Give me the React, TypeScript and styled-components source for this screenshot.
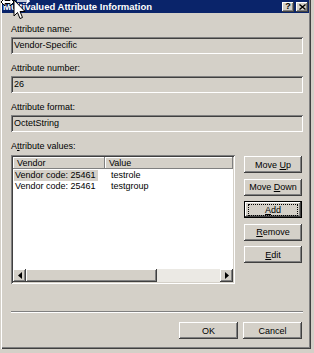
import React from 'react';
import styled, { createGlobalStyle } from 'styled-components';

const GlobalStyle = createGlobalStyle`
  html, body {
    margin: 0;
    padding: 0;
    background: #404040;
    overflow: hidden;
  }
`;

const raised = `
  box-shadow: inset -1px -1px #404040, inset 1px 1px #ffffff,
    inset -2px -2px #808080, inset 2px 2px #d4d0c8;
`;

const sunken = `
  box-shadow: inset 1px 1px #808080, inset -1px -1px #ffffff,
    inset 2px 2px #404040, inset -2px -2px #d4d0c8;
`;

const Screen = styled.div`
  width: 314px;
  height: 353px;
  position: relative;
  background: #d4d0c8;
  font-family: 'Liberation Sans', Arial, sans-serif;
  font-size: 9px;
  color: #000;
`;

const Window = styled.div`
  width: 311px;
  height: 349px;
  box-sizing: border-box;
  padding: 0 2px 2px 2px;
  display: flex;
  flex-direction: column;
  background: #d4d0c8;
  box-shadow: inset 1px 0 #d4d0c8, inset 2px 0 #ffffff,
    inset -1px -1px #404040, inset -2px -2px #808080;
`;

const TitleBar = styled.div`
  height: 13px;
  display: flex;
  align-items: center;
  padding: 0 1px 0 1px;
  background: #0a246a;
  color: #ffffff;
  font-weight: bold;
  font-size: 9.5px;
`;

const TitleText = styled.span`
  flex: 1;
  white-space: nowrap;
`;

const CaptionButton = styled.div`
  width: 12px;
  height: 10px;
  margin-left: 2px;
  display: flex;
  align-items: center;
  justify-content: center;
  background: #d4d0c8;
  color: #000;
  font-size: 9px;
  font-weight: bold;
  line-height: 1;
  ${raised}
`;

const Body = styled.div`
  flex: 1;
  display: flex;
  flex-direction: column;
  padding: 10px 6px 0 9px;
`;

const Label = styled.div<{ $gap?: number }>`
  height: 12px;
  line-height: 12px;
  margin-bottom: ${(p) => p.$gap ?? 2}px;
`;

const Field = styled.div`
  display: flex;
  flex-direction: column;
  margin-bottom: 8px;
`;

const ReadOnlyBox = styled.div`
  height: 17px;
  line-height: 17px;
  padding-left: 3px;
  background: #d4d0c8;
  ${sunken}
`;

const ValuesRow = styled.div`
  display: flex;
  gap: 9px;
`;

const ListView = styled.div`
  width: 224px;
  height: 129px;
  box-sizing: border-box;
  padding: 2px;
  display: flex;
  flex-direction: column;
  background: #ffffff;
  ${sunken}
`;

const Header = styled.div`
  display: grid;
  grid-template-columns: 92px 1fr;
  height: 12px;
`;

const HeaderCell = styled.div`
  line-height: 12px;
  padding-left: 4px;
  background: #d4d0c8;
  box-shadow: inset -1px -1px #808080, inset 1px 1px #ffffff;
`;

const Rows = styled.div`
  flex: 1;
  padding-top: 1px;
`;

const Row = styled.div`
  display: grid;
  grid-template-columns: 92px 1fr;
  height: 11px;
  line-height: 11px;
`;

const Cell = styled.div`
  padding-left: 6px;
  white-space: nowrap;
`;

const FirstCell = styled.div`
  padding-left: 1px;
  white-space: nowrap;
`;

const CellText = styled.span<{ $selected?: boolean }>`
  display: inline-block;
  padding: 0 2px 0 1px;
  background: ${(p) => (p.$selected ? '#d4d0c8' : 'transparent')};
`;

const ScrollBar = styled.div`
  height: 13px;
  display: flex;
`;

const ScrollArrow = styled.div`
  width: 13px;
  height: 13px;
  display: flex;
  align-items: center;
  justify-content: center;
  background: #d4d0c8;
  ${raised}
`;

const Thumb = styled.div`
  width: 131px;
  background: #d4d0c8;
  ${raised}
`;

const Trough = styled.div`
  flex: 1;
  background-color: #ebe9e4;
`;

const SideButtons = styled.div`
  display: flex;
  flex-direction: column;
  gap: 5.5px;
  padding-top: 1px;
`;

const Button = styled.div<{ $default?: boolean; $width?: number }>`
  width: ${(p) => p.$width ?? 58}px;
  height: 17px;
  box-sizing: border-box;
  display: flex;
  align-items: center;
  justify-content: center;
  background: #d4d0c8;
  ${(p) =>
    p.$default
      ? `box-shadow: inset 0 0 0 1px #000, inset -2px -2px #404040, inset 2px 2px #ffffff, inset -3px -3px #808080;`
      : `box-shadow: inset -1px -1px #404040, inset 1px 1px #ffffff, inset -2px -2px #808080, inset 2px 2px #d4d0c8;`}
`;

const FocusRing = styled.span`
  display: flex;
  align-items: center;
  justify-content: center;
  width: 48px;
  height: 10px;
  outline: 1px dotted #000;
`;

const Separator = styled.div`
  margin-top: 27px;
  height: 0;
  border-top: 1px solid #808080;
  border-bottom: 1px solid #ffffff;
`;

const Footer = styled.div`
  display: flex;
  justify-content: flex-end;
  gap: 5px;
  margin-top: 9px;
  padding-right: 1px;
`;

const Cursor = styled.svg`
  position: absolute;
  left: 0;
  top: -3px;
  pointer-events: none;
`;

function Mnemonic({ text, at }: { text: string; at: number }) {
  return (
    <span>
      {text.slice(0, at)}
      <u>{text[at]}</u>
      {text.slice(at + 1)}
    </span>
  );
}

export default function App() {
  const rows = [
    { vendor: 'Vendor code: 25461', value: 'testrole', selected: true },
    { vendor: 'Vendor code: 25461', value: 'testgroup', selected: false },
  ];

  return (
    <Screen>
      <GlobalStyle />
      <Window>
        <TitleBar>
          <TitleText>Multivalued Attribute Information</TitleText>
          <CaptionButton>?</CaptionButton>
          <CaptionButton>
            <svg width="7" height="6" viewBox="0 0 7 6">
              <path d="M0.5 0.5 L6.5 5.5 M6.5 0.5 L0.5 5.5" stroke="#000" strokeWidth="1.4" />
            </svg>
          </CaptionButton>
        </TitleBar>
        <Body>
          <Field>
            <Label>Attribute name:</Label>
            <ReadOnlyBox>Vendor-Specific</ReadOnlyBox>
          </Field>
          <Field>
            <Label>Attribute number:</Label>
            <ReadOnlyBox>26</ReadOnlyBox>
          </Field>
          <Field>
            <Label>Attribute format:</Label>
            <ReadOnlyBox>OctetString</ReadOnlyBox>
          </Field>
          <Label $gap={3}>
            <Mnemonic text="Attribute values:" at={1} />
          </Label>
          <ValuesRow>
            <ListView>
              <Header>
                <HeaderCell>Vendor</HeaderCell>
                <HeaderCell>Value</HeaderCell>
              </Header>
              <Rows>
                {rows.map((r, i) => (
                  <Row key={i}>
                    <FirstCell>
                      <CellText $selected={r.selected}>{r.vendor}</CellText>
                    </FirstCell>
                    <Cell>{r.value}</Cell>
                  </Row>
                ))}
              </Rows>
              <ScrollBar>
                <ScrollArrow>
                  <svg width="4" height="7" viewBox="0 0 4 7">
                    <path d="M4 0 L0 3.5 L4 7 Z" fill="#000" />
                  </svg>
                </ScrollArrow>
                <Thumb />
                <Trough />
                <ScrollArrow>
                  <svg width="4" height="7" viewBox="0 0 4 7">
                    <path d="M0 0 L4 3.5 L0 7 Z" fill="#000" />
                  </svg>
                </ScrollArrow>
              </ScrollBar>
            </ListView>
            <SideButtons>
              <Button>
                <Mnemonic text="Move Up" at={5} />
              </Button>
              <Button>
                <Mnemonic text="Move Down" at={5} />
              </Button>
              <Button $default>
                <FocusRing>
                  <Mnemonic text="Add" at={0} />
                </FocusRing>
              </Button>
              <Button>
                <Mnemonic text="Remove" at={0} />
              </Button>
              <Button>
                <Mnemonic text="Edit" at={0} />
              </Button>
            </SideButtons>
          </ValuesRow>
          <Separator />
          <Footer>
            <Button $width={59}>OK</Button>
            <Button $width={59}>Cancel</Button>
          </Footer>
        </Body>
      </Window>
      <Cursor width="30" height="26" viewBox="0 0 30 26">
        <path
          d="M1 5 L5 1 L5 3.5 L10 3.5 L10 1 L14 5 L10 9 L10 6.5 L5 6.5 L5 9 Z"
          fill="#fff"
          stroke="#000"
          strokeWidth="1"
        />
        <path
          d="M17 4 L29 4 L26 1 M29 4 L26 7"
          fill="none"
          stroke="#fff"
          strokeWidth="1.5"
        />
        <path
          d="M14 3 L14 19 L17.5 15.5 L20 21.5 L22.5 20.5 L20 14.5 L25 14.5 Z"
          fill="#fff"
          stroke="#000"
          strokeWidth="1"
        />
      </Cursor>
    </Screen>
  );
}
